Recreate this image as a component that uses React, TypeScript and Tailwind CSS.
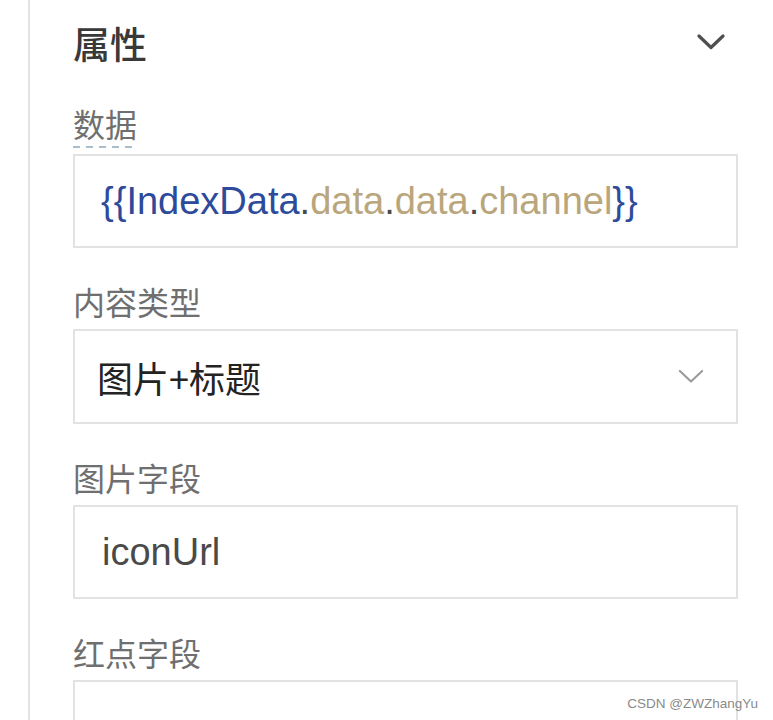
import React from "react";

const CJK = "font-['Noto_Sans_CJK_SC','Noto_Sans',sans-serif]";
const LAT = "font-['Liberation_Sans','Noto_Sans_CJK_SC',sans-serif]";

function Chevron({ className, stroke, width }: { className: string; stroke: string; width: number }) {
  return (
    <svg className={className} viewBox="0 0 28 16" fill="none">
      <path d="M2 2 L14 13.5 L26 2" stroke={stroke} strokeWidth={width} strokeLinecap="round" strokeLinejoin="round" />
    </svg>
  );
}

function Label({ text }: { text: string }) {
  return (
    <div className={`${CJK} text-[32px] leading-[44px] h-[44px] text-[#6f6f6f]`}>{text}</div>
  );
}

export default function App() {
  return (
    <div className="relative w-[773px] h-[720px] overflow-hidden bg-white">
      <div className="flex h-full">
        <div className="w-[28px] shrink-0" />
        <div className="w-[2px] shrink-0 bg-[#e3e3e3]" />
        <div className="flex-1 flex flex-col pl-[43px] pr-[35px] pt-[21px]">
          {/* header */}
          <div className="flex items-center justify-between h-[44px]">
            <div className={`${CJK} text-[37px] leading-[44px] font-medium text-[#393939]`}>属性</div>
            <Chevron className="w-[28px] h-[16px] mr-[13px] mt-[-3px]" stroke="#4f4f4f" width={3.2} />
          </div>

          {/* 数据 */}
          <div className="mt-[36px] flex flex-col">
            <div className="self-start flex flex-col">
              <Label text="数据" />
              <div className="h-[2px] mt-[1px] w-[64px] bg-[repeating-linear-gradient(90deg,#a9bfcc_0_7px,transparent_7px_13px)]" />
            </div>
            <div className="mt-[6px] h-[94px] border-2 border-[#e2e2e2] flex items-center pl-[26px]">
              <span className={`${LAT} text-[38px] whitespace-nowrap`}>
                <span className="text-[#2d4a9b]">{"{{IndexData"}</span>
                <span className="text-[#4a4a4a]">.</span>
                <span className="text-[#b9a67c]">data</span>
                <span className="text-[#4a4a4a]">.</span>
                <span className="text-[#b9a67c]">data</span>
                <span className="text-[#4a4a4a]">.</span>
                <span className="text-[#b9a67c]">channel</span>
                <span className="text-[#2d4a9b]">{"}}"}</span>
              </span>
            </div>
          </div>

          {/* 内容类型 */}
          <div className="mt-[31px] flex flex-col">
            <Label text="内容类型" />
            <div className="mt-[6px] h-[95px] border-2 border-[#e2e2e2] flex items-center justify-between pl-[22px] pr-[32px]">
              <span className={`${CJK} text-[36px] text-[#232323]`}>图片+标题</span>
              <Chevron className="w-[26px] h-[15px]" stroke="#9a9a9a" width={2.2} />
            </div>
          </div>

          {/* 图片字段 */}
          <div className="mt-[31px] flex flex-col">
            <Label text="图片字段" />
            <div className="mt-[6px] h-[94px] border-2 border-[#e2e2e2] flex items-center pl-[27px]">
              <span className={`${LAT} text-[38px] text-[#4a4a4a]`}>iconUrl</span>
            </div>
          </div>

          {/* 红点字段 */}
          <div className="mt-[31px] flex flex-col">
            <Label text="红点字段" />
            <div className="mt-[6px] h-[95px] shrink-0 border-2 border-[#e2e2e2]" />
          </div>
        </div>
      </div>
      <div className={`absolute right-[15px] bottom-[8px] ${LAT} text-[13.5px] leading-[16px] text-[#8a8a8a]`}>
        CSDN @ZWZhangYu
      </div>
    </div>
  );
}
